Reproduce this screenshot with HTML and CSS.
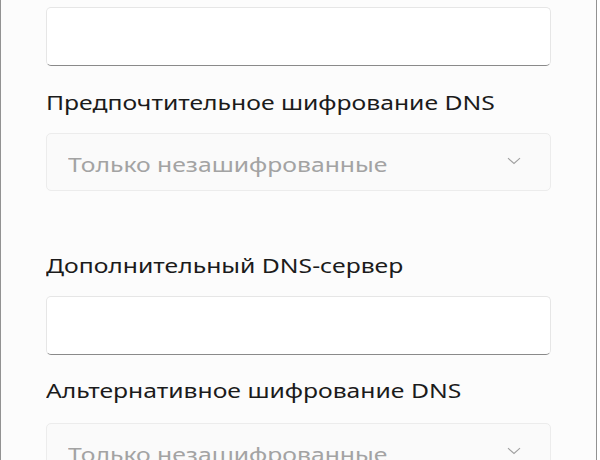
FILE: index.html
```html
<!DOCTYPE html>
<html lang="ru">
<head>
<meta charset="utf-8">
<link rel="stylesheet" href="styles.css">
</head>
<body>
<div class="screen">
  <div class="dialog">
    <div class="field input first"></div>
    <div class="label l1"><span class="wide">Предпочтительное шифрование DNS</span></div>
    <div class="field combo c1">
      <span class="combo-text wide">Только незашифрованные</span>
      <svg class="chev" width="14" height="8" viewBox="0 0 14 8"><path d="M1 1.2 L7 6.4 L13 1.2" fill="none" stroke="#a0a0a0" stroke-width="1.1"/></svg>
    </div>
    <div class="label l2"><span class="wide">Дополнительный DNS-сервер</span></div>
    <div class="field input i2"></div>
    <div class="label l3"><span class="wide">Альтернативное шифрование DNS</span></div>
    <div class="field combo c2">
      <span class="combo-text wide">Только незашифрованные</span>
      <svg class="chev" width="14" height="8" viewBox="0 0 14 8"><path d="M1 1.2 L7 6.4 L13 1.2" fill="none" stroke="#a0a0a0" stroke-width="1.1"/></svg>
    </div>
  </div>
  <div class="outside"></div>
</div>
</body>
</html>
```

FILE: styles.css
```css
html, body {
  margin: 0;
  padding: 0;
  background: #ffffff;
  overflow: hidden;
}
.screen {
  display: flex;
  width: 600px;
  height: 460px;
  overflow: hidden;
}
.dialog {
  width: 597px;
  height: 460px;
  flex: none;
  background: #fcfcfc;
  border-left: 1px solid #929292;
  border-right: 1px solid #929292;
  display: flex;
  flex-direction: column;
  padding-left: 45px;
  padding-right: 44px;
  box-sizing: border-box;
  font-family: "Noto Sans", "Open Sans", sans-serif;
}
.outside {
  flex: 1;
  background: #ffffff;
}
.field {
  box-sizing: border-box;
  width: 505px;
  border-radius: 5px;
  flex: none;
}
.input {
  height: 59px;
  background: #ffffff;
  border: 1px solid #e6e6e6;
  border-bottom: 1px solid #8a8a8a;
}
.first { margin-top: 7px; }
.combo {
  height: 58px;
  background: #fafafa;
  border: 1px solid #ececec;
  display: flex;
  align-items: center;
  justify-content: space-between;
  padding: 0 29px 0 21px;
}
.wide {
  display: inline-block;
  transform: scaleX(1.3);
  transform-origin: left center;
  white-space: nowrap;
}
.combo-text {
  font-size: 19px;
  color: #a3a3a3;
  margin-top: 5px;
}
.chev { margin-bottom: 3px; }
.label {
  font-size: 19px;
  line-height: 26px;
  color: #1b1b1b;
  height: 26px;
  white-space: nowrap;
}
.l1 { margin-top: 24px; }
.c1 { margin-top: 17px; }
.l2 { margin-top: 62px; }
.i2 { margin-top: 17px; }
.l3 { margin-top: 23px; }
.c2 { margin-top: 19px; }
```
